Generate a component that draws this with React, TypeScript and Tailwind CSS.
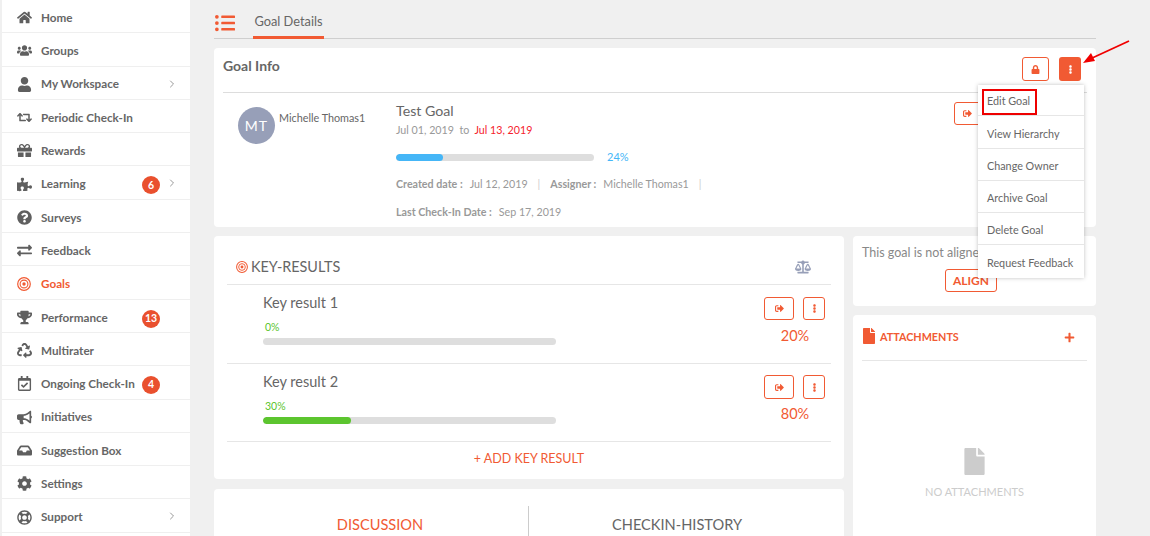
import React from "react";
import {
  FaHome, FaUsers, FaUser, FaRetweet, FaGift, FaPuzzlePiece, FaQuestionCircle, FaExchangeAlt,
  FaTrophy, FaRecycle, FaRegCalendarCheck, FaBullhorn, FaInbox, FaCog, FaRegLifeRing, FaLock,
  FaEllipsisV, FaBalanceScale, FaFile, FaPlus, FaListUl, FaSignOutAlt,
} from "react-icons/fa";
import { ChevronRight } from "lucide-react";

function Target({ size }: { size: number }) {
  return (
    <svg width={size} height={size} viewBox="0 0 14 14" fill="none" stroke="#f15a33">
      <circle cx="7" cy="7" r="6.3" strokeWidth="1.2" />
      <circle cx="7" cy="7" r="3.9" strokeWidth="1.1" />
      <circle cx="7" cy="7" r="1.7" fill="#f15a33" strokeWidth="0" />
    </svg>
  );
}

const items: { label: string; Icon: any; badge?: string; chev?: boolean; active?: boolean }[] = [
  { label: "Home", Icon: FaHome },
  { label: "Groups", Icon: FaUsers },
  { label: "My Workspace", Icon: FaUser, chev: true },
  { label: "Periodic Check-In", Icon: FaRetweet },
  { label: "Rewards", Icon: FaGift },
  { label: "Learning", Icon: FaPuzzlePiece, badge: "6", chev: true },
  { label: "Surveys", Icon: FaQuestionCircle },
  { label: "Feedback", Icon: FaExchangeAlt },
  { label: "Goals", Icon: null, active: true },
  { label: "Performance", Icon: FaTrophy, badge: "13" },
  { label: "Multirater", Icon: FaRecycle },
  { label: "Ongoing Check-In", Icon: FaRegCalendarCheck, badge: "4" },
  { label: "Initiatives", Icon: FaBullhorn },
  { label: "Suggestion Box", Icon: FaInbox },
  { label: "Settings", Icon: FaCog },
  { label: "Support", Icon: FaRegLifeRing, chev: true },
];

function Sidebar() {
  return (
    <aside className="w-[188px] ml-[2px] shrink-0 bg-white">
      {items.map(({ label, Icon, badge, chev, active }) => (
        <div key={label} className="relative h-[33.3px] border-b border-[#efefef] flex items-center pt-[3px]">
          <span className="w-[39px] pl-[15px] flex items-center text-[#5f5f5f] text-[15px]">
            {Icon ? <Icon /> : <Target size={14} />}
          </span>
          <span className={"text-[11.7px] font-bold " + (active ? "text-[#f15a33]" : "text-[#666]")}>{label}</span>
          {badge && (
            <span className="absolute left-[140px] top-[10px] w-[18px] h-[18px] rounded-full bg-[#e9502e] text-white text-[10.5px] font-bold flex items-center justify-center">
              {badge}
            </span>
          )}
          {chev && <ChevronRight className="absolute left-[164px] top-[11px] text-[#999]" size={12} />}
        </div>
      ))}
    </aside>
  );
}

function OutlineBtn({ w, h, children, cls = "" }: { w: number; h: number; children: React.ReactNode; cls?: string }) {
  return (
    <span
      style={{ width: w, height: h }}
      className={"border border-[#f15a33] rounded-[3px] flex items-center justify-center text-[#f15a33] text-[9px] bg-white " + cls}
    >
      {children}
    </span>
  );
}

function KeyResult(props: { name: string; pct: string; fill: number; weight: string; h: string; btn: string; btnH: number; wt: string }) {
  const { name, pct, fill, weight, h, btn, btnH, wt } = props;
  return (
    <div className={h + " border-b border-[#e6e6e6] relative pl-[36px] pt-[8px]"}>
      <div className="text-[14.5px] leading-[20px] text-[#666]">{name}</div>
      <div className="text-[10.5px] leading-[14px] mt-[7px] ml-[2px] text-[#5cc52f]">{pct}</div>
      <div className="w-[293px] h-[7px] rounded bg-[#dedede] mt-[4px] overflow-hidden">
        <div className="h-full rounded bg-[#5cc52f]" style={{ width: fill }} />
      </div>
      <div className={"absolute left-[537px] flex gap-[9px] " + btn}>
        <OutlineBtn w={30} h={btnH}><FaSignOutAlt /></OutlineBtn>
        <OutlineBtn w={22} h={btnH}><FaEllipsisV /></OutlineBtn>
      </div>
      <div className={"absolute left-[537px] w-[62px] text-center text-[14.5px] leading-[20px] text-[#f15a33] " + wt}>{weight}</div>
    </div>
  );
}

const menu: { label: string; h: string }[] = [
  { label: "Edit Goal", h: "h-[31px] pt-[2px]" },
  { label: "View Hierarchy", h: "h-[33px] pt-[4px]" },
  { label: "Change Owner", h: "h-[32px] pt-[3px]" },
  { label: "Archive Goal", h: "h-[32px] pt-[3px]" },
  { label: "Delete Goal", h: "h-[32px] pt-[3px]" },
  { label: "Request Feedback", h: "h-[33px] pt-[3px]" },
];

export default function App() {
  return (
    <div className="w-[1150px] h-[536px] overflow-hidden bg-[#f0f0f0] flex relative font-['Lato','Open_Sans',sans-serif]">
      <Sidebar />
      <main className="ml-[24px] w-[882px] shrink-0">
        <div className="h-[39px] border-b border-[#cfcfcf] flex items-end relative">
          <FaListUl className="absolute left-[1px] top-[13px] text-[#f15a33] text-[20px]" />
          <div className="ml-[39px] w-[71px] h-[25px] text-center text-[12.8px] text-[#666] border-b-[3px] border-[#f15a33] leading-[15px] translate-y-[1px]">
            Goal Details
          </div>
        </div>

        <section className="mt-[9px] h-[179px] bg-white rounded-[4px] relative px-[9px]">
          <div className="h-[45px] border-b border-[#ddd] pt-[8px] text-[14px] leading-[20px] font-bold text-[#666]">Goal Info</div>
          <div className="absolute left-[808px] top-[9px]"><OutlineBtn w={27} h={24}><FaLock /></OutlineBtn></div>
          <div className="absolute left-[845px] top-[9px] w-[22px] h-[24px] rounded-[3px] bg-[#f15a33] text-white text-[9px] flex items-center justify-center"><FaEllipsisV /></div>
          <div className="flex">
            <div className="mt-[14px] ml-[15px] w-[37px] h-[37px] rounded-full bg-[#979fb8] text-white text-[14px] tracking-[1px] flex items-center justify-center">MT</div>
            <div className="mt-[18px] ml-[4px] w-[117px] text-[10.8px] leading-[14px] text-[#666]">Michelle Thomas1</div>
            <div className="pt-[8px]">
              <div className="text-[14.2px] leading-[20px] text-[#666]">Test Goal</div>
              <div className="text-[10.7px] leading-[16px] text-[#999] mt-[1px]">
                Jul 01, 2019 &nbsp;to&nbsp; <span className="text-[#f5222d]">Jul 13, 2019</span>
              </div>
              <div className="flex items-center mt-[12px]">
                <div className="w-[198px] h-[7px] rounded bg-[#dedede] overflow-hidden">
                  <div className="w-[47px] h-full rounded bg-[#45b6f7]" />
                </div>
                <span className="ml-[13px] text-[11px] leading-[14px] text-[#45b6f7]">24%</span>
              </div>
              <div className="mt-[13px] text-[10.7px] leading-[14px] text-[#999] flex">
                <b>Created date :</b><span className="ml-[7px]">Jul 12, 2019</span>
                <span className="mx-[10px] text-[#ccc]">|</span>
                <b>Assigner :</b><span className="ml-[7px]">Michelle Thomas1</span>
                <span className="ml-[10px] text-[#ccc]">|</span>
              </div>
              <div className="mt-[14px] text-[10.7px] leading-[14px] text-[#999] flex">
                <b>Last Check-In Date :</b><span className="ml-[7px]">Sep 17, 2019</span>
              </div>
            </div>
          </div>
          <div className="absolute left-[740px] top-[54px]"><OutlineBtn w={40} h={23} cls="justify-start pl-[8px]"><FaSignOutAlt /></OutlineBtn></div>
        </section>

        <div className="flex gap-[9px] mt-[9px]">
          <div className="w-[630px] shrink-0">
            <section className="h-[243px] bg-white rounded-[4px] px-[13px] relative">
              <div className="h-[49px] border-b border-[#e6e6e6] flex items-center pt-[14px]">
                <span className="ml-[9px]"><Target size={12} /></span>
                <span className="ml-[3px] text-[14.4px] text-[#666]">KEY-RESULTS</span>
                <FaBalanceScale className="absolute left-[581px] top-[23px] text-[#979fb8] text-[16px]" />
              </div>
              <KeyResult h="h-[79px]" name="Key result 1" pct="0%" fill={0} weight="20%" btn="top-[12px]" btnH={23} wt="top-[41px]" />
              <KeyResult h="h-[78px]" name="Key result 2" pct="30%" fill={88} weight="80%" btn="top-[11px]" btnH={24} wt="top-[40px]" />
              <div className="text-center text-[12.5px] text-[#f15a33] pt-[8px] leading-[18px]">+ ADD KEY RESULT</div>
            </section>
            <section className="mt-[10px] h-[60px] bg-white rounded-[4px] flex pt-[17px]">
              <div className="w-[315px] h-[30px] pl-[18px] text-center text-[14.6px] leading-[38px] text-[#f15a33] border-r border-[#ccc]">DISCUSSION</div>
              <div className="w-[315px] pr-[19px] text-center text-[14.6px] leading-[38px] text-[#666]">CHECKIN-HISTORY</div>
            </section>
          </div>
          <div className="w-[243px] shrink-0">
            <section className="h-[70px] bg-white rounded-[4px] pt-[9px] pl-[9px] text-[12.5px] leading-[16px] text-[#888]">
              This goal is not aligned
              <div className="ml-[83px] mt-[8px] w-[52px] h-[23px] border border-[#f15a33] rounded-[3px] text-[12px] font-bold text-[#f15a33] text-center leading-[21px]">ALIGN</div>
            </section>
            <section className="mt-[9px] h-[230px] bg-white rounded-[4px] px-[9px] flex flex-col">
              <div className="h-[46px] shrink-0 border-b border-[#e6e6e6] flex items-start pt-[13px] text-[#f15a33] relative">
                <FaFile className="text-[16px] -ml-[1px]" />
                <span className="ml-[3px] mt-[1px] text-[10.8px] leading-[16px] font-bold">ATTACHMENTS</span>
                <FaPlus className="absolute left-[202px] top-[17px] text-[11px]" />
              </div>
              <div className="flex flex-col items-center mt-[87px]">
                <FaFile className="text-[#ccc] text-[27px]" />
                <span className="text-[11px] leading-[14px] mt-[10px] text-[#ccc]">NO ATTACHMENTS</span>
              </div>
            </section>
          </div>
        </div>
      </main>

      <div className="absolute left-[978px] top-[85px] w-[106px] bg-white shadow-[0_0_4px_rgba(0,0,0,0.25)]">
        {menu.map((m, i) => (
          <div key={m.label} className={m.h + " pl-[9px] flex items-center text-[10.8px] text-[#666] " + (i < 5 ? "border-b border-[#e6e6e6]" : "")}>{m.label}</div>
        ))}
        <div className="absolute left-[4px] top-[4px] w-[55px] h-[26px] border-2 border-[#ee0000]" />
      </div>

      <svg className="absolute left-[1080px] top-[38px]" width="52" height="30" viewBox="0 0 52 30">
        <line x1="49" y1="3" x2="10" y2="21" stroke="#f00000" strokeWidth="1.8" />
        <polygon points="3,25 11,15 15,23" fill="#f00000" />
      </svg>
    </div>
  );
}
